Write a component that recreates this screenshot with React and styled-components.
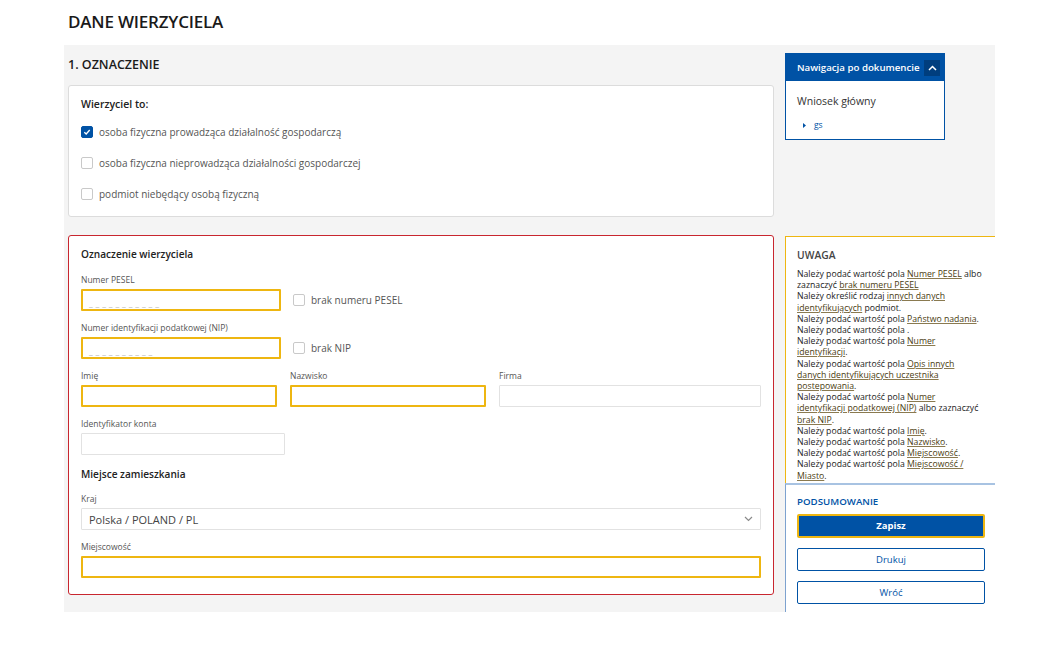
import React from "react";
import styled, { createGlobalStyle } from "styled-components";

const Global = createGlobalStyle`
  * { box-sizing: border-box; }
  html, body { margin: 0; padding: 0; background: #fff; }
  body { font-family: "Open Sans", "Noto Sans", sans-serif; color: #333; }
`;

const BLUE = "#0052a5";
const YELLOW = "#eeb611";

const Page = styled.div`
  width: 931px;
  margin-left: 64px;
`;

const Title = styled.h1`
  margin: 0;
  height: 45px;
  padding: 11px 4px 0;
  font-size: 17px;
  line-height: 22px;
  font-weight: 600;
  color: #1a1a1a;
  letter-spacing: -0.2px;
`;

const Main = styled.div`
  display: flex;
  gap: 11px;
  background: #f4f4f4;
  padding: 0 0 17px 4px;
`;

const LeftCol = styled.div`
  width: 706px;
  display: flex;
  flex-direction: column;
`;

const RightCol = styled.div`
  width: 210px;
  display: flex;
  flex-direction: column;
  margin-bottom: -17px;
`;

const SectionTitle = styled.h2`
  margin: 0;
  padding: 12px 0 12px;
  font-size: 12.5px;
  line-height: 16px;
  font-weight: 600;
  color: #1a1a1a;
`;

const Card = styled.div`
  background: #fff;
  border: 1px solid ${(p) => (p.$invalid ? "#c8262f" : "#dcdcdc")};
  border-radius: 3px;
  padding: ${(p) => p.$pad || "11px 12px 12px"};
  margin-top: ${(p) => p.$mt || "0"};
`;

const CardTitle = styled.div`
  font-size: ${(p) => p.$size || "10.1px"};
  line-height: 14px;
  font-weight: 600;
  color: #222;
  margin-top: ${(p) => p.$mt || "0"};
`;

const OptionList = styled.div`
  display: flex;
  flex-direction: column;
  gap: 15px;
  margin-top: 13px;
`;

const CheckRow = styled.label`
  display: flex;
  align-items: center;
  gap: 6px;
  height: 16px;
  font-size: 10px;
  color: #555;
`;

const Box = styled.span`
  width: 12px;
  height: 12px;
  flex: none;
  border-radius: 2px;
  border: 1px solid ${(p) => (p.$checked ? BLUE : "#c9c9c9")};
  background: ${(p) => (p.$checked ? BLUE : "#fff")};
  display: inline-flex;
  align-items: center;
  justify-content: center;
`;

const Check = ({ checked, children }) => (
  <CheckRow>
    <Box $checked={checked}>
      {checked && (
        <svg width="8" height="8" viewBox="0 0 8 8">
          <path d="M1.3 4.2 L3.2 6 L6.7 2" fill="none" stroke="#fff" strokeWidth="1.3" />
        </svg>
      )}
    </Box>
    {children}
  </CheckRow>
);

const Field = styled.div`
  display: flex;
  flex-direction: column;
  margin-top: ${(p) => p.$mt || "0"};
`;

const Label = styled.div`
  font-size: 8.5px;
  line-height: 12px;
  color: #555;
  margin-bottom: 3px;
`;

const Input = styled.div`
  height: 22px;
  width: ${(p) => p.$w || "100%"};
  border: ${(p) => (p.$required ? `2px solid ${YELLOW}` : "1px solid #e2e2e2")};
  border-radius: 1px;
  background: #fff;
  display: flex;
  align-items: center;
  padding: 0 ${(p) => (p.$required ? "6px" : "7px")};
  font-size: 11px;
  color: #444;
`;

const Mask = styled.span`
  color: #b8b8b8;
  font-size: 8.5px;
  letter-spacing: 2.9px;
  padding-top: 5px;
`;

const InlineRow = styled.div`
  display: flex;
  align-items: center;
  gap: 12px;
`;

const Grid3 = styled.div`
  display: grid;
  grid-template-columns: 196px 196px 1fr;
  column-gap: 13px;
  margin-top: 11px;
`;

const Select = styled(Input)`
  justify-content: space-between;
`;

const NavBox = styled.div`
  width: 160px;
  margin-top: 8px;
  background: #fff;
  border: 1px solid ${BLUE};
`;

const NavHeader = styled.div`
  height: 27px;
  background: ${BLUE};
  display: flex;
  align-items: center;
  justify-content: space-between;
  padding: 0 4px 0 11px;
  color: #fff;
  font-size: 9.7px;
  font-weight: 600;
`;

const Toggle = styled.span`
  width: 16px;
  height: 16px;
  background: #003e7e;
  display: inline-flex;
  align-items: center;
  justify-content: center;
`;

const NavBody = styled.div`
  padding: 13px 10px 8px 11px;
`;

const NavItem = styled.div`
  font-size: 10.5px;
  line-height: 14px;
  color: #333;
`;

const NavLink = styled.div`
  display: flex;
  align-items: center;
  gap: 8px;
  margin-top: 11px;
  padding-left: 6px;
  font-size: 8.5px;
  line-height: 12px;
  color: ${BLUE};
`;

const Notice = styled.div`
  margin-top: 96px;
  background: #fff;
  border-top: 1px solid ${YELLOW};
  border-left: 1px solid ${YELLOW};
  padding: 11px 8px 1px 11px;
`;

const NoticeTitle = styled.div`
  font-size: 10.3px;
  line-height: 14px;
  font-weight: 600;
  color: #444;
  margin-bottom: 7px;
`;

const Msg = styled.div`
  font-size: 8.7px;
  line-height: 11.2px;
  color: #222;
  white-space: nowrap;
`;

const Ref = styled.span`
  color: #4a3c10;
  text-decoration: underline;
  text-decoration-color: #8a7a50;
`;

const Summary = styled.div`
  flex: 1;
  background: #fff;
  border-top: 2px solid #a8c3e2;
  border-left: 1px solid #7da2cf;
  padding: 10px 10px 0 11px;
  display: flex;
  flex-direction: column;
  gap: 10px;
`;

const SummaryTitle = styled.div`
  font-size: 9.7px;
  line-height: 14px;
  font-weight: 600;
  color: ${BLUE};
  margin-bottom: -5px;
`;

const Button = styled.button`
  width: 188px;
  height: ${(p) => (p.$primary ? "24px" : "23px")};
  font-family: inherit;
  font-size: 9.5px;
  font-weight: ${(p) => (p.$primary ? 700 : 400)};
  color: ${(p) => (p.$primary ? "#fff" : BLUE)};
  background: ${(p) => (p.$primary ? BLUE : "#fff")};
  border: ${(p) => (p.$primary ? `2px solid ${YELLOW}` : `1px solid ${BLUE}`)};
  border-radius: 2px;
  padding: 0;
  cursor: pointer;
`;

// each message is a list of lines; a line is a list of plain text and [linked field] parts
const messages = [
  [["Należy podać wartość pola ", ["Numer PESEL"], " albo"], ["zaznaczyć ", ["brak numeru PESEL"]]],
  [["Należy określić rodzaj ", ["innych danych"]], [["identyfikujących"], " podmiot."]],
  [["Należy podać wartość pola ", ["Państwo nadania"], "."]],
  [["Należy podać wartość pola ."]],
  [["Należy podać wartość pola ", ["Numer"]], [["identyfikacji"], "."]],
  [
    ["Należy podać wartość pola ", ["Opis innych"]],
    [["danych identyfikujących uczestnika"]],
    [["postepowania"], "."],
  ],
  [
    ["Należy podać wartość pola ", ["Numer"]],
    [["identyfikacji podatkowej (NIP)"], " albo zaznaczyć"],
    [["brak NIP"], "."],
  ],
  [["Należy podać wartość pola ", ["Imię"], "."]],
  [["Należy podać wartość pola ", ["Nazwisko"], "."]],
  [["Należy podać wartość pola ", ["Miejscowość"], "."]],
  [["Należy podać wartość pola ", ["Miejscowość /"]], [["Miasto"], "."]],
];

export default function App() {
  return (
    <Page>
      <Global />
      <Title>DANE WIERZYCIELA</Title>
      <Main>
        <LeftCol>
          <SectionTitle>1. OZNACZENIE</SectionTitle>
          <Card $pad="11px 12px 14px">
            <CardTitle $size="10.5px">Wierzyciel to:</CardTitle>
            <OptionList>
              <Check checked>osoba fizyczna prowadząca działalność gospodarczą</Check>
              <Check>osoba fizyczna nieprowadząca działalności gospodarczej</Check>
              <Check>podmiot niebędący osobą fizyczną</Check>
            </OptionList>
          </Card>

          <Card $invalid $mt="18px" $pad="11px 12px 16px">
            <CardTitle>Oznaczenie wierzyciela</CardTitle>
            <Field $mt="13px">
              <Label>Numer PESEL</Label>
              <InlineRow>
                <Input $required $w="200px">
                  <Mask>___________</Mask>
                </Input>
                <Check>brak numeru PESEL</Check>
              </InlineRow>
            </Field>
            <Field $mt="11px">
              <Label>Numer identyfikacji podatkowej (NIP)</Label>
              <InlineRow>
                <Input $required $w="200px">
                  <Mask>__________</Mask>
                </Input>
                <Check>brak NIP</Check>
              </InlineRow>
            </Field>
            <Grid3>
              <Field>
                <Label>Imię</Label>
                <Input $required />
              </Field>
              <Field>
                <Label>Nazwisko</Label>
                <Input $required />
              </Field>
              <Field>
                <Label>Firma</Label>
                <Input />
              </Field>
            </Grid3>
            <Field $mt="11px">
              <Label>Identyfikator konta</Label>
              <Input $w="204px" />
            </Field>
            <CardTitle $mt="12px">Miejsce zamieszkania</CardTitle>
            <Field $mt="12px">
              <Label>Kraj</Label>
              <Select>
                <span>Polska / POLAND / PL</span>
                <svg width="9" height="6" viewBox="0 0 9 6">
                  <path d="M1 1 L4.5 4.5 L8 1" fill="none" stroke="#8a8a8a" strokeWidth="1.2" />
                </svg>
              </Select>
            </Field>
            <Field $mt="11px">
              <Label>Miejscowość</Label>
              <Input $required />
            </Field>
          </Card>
        </LeftCol>

        <RightCol>
          <NavBox>
            <NavHeader>
              <span>Nawigacja po dokumencie</span>
              <Toggle>
                <svg width="9" height="6" viewBox="0 0 9 6">
                  <path d="M1 5 L4.5 1.5 L8 5" fill="none" stroke="#fff" strokeWidth="1.5" />
                </svg>
              </Toggle>
            </NavHeader>
            <NavBody>
              <NavItem>Wniosek główny</NavItem>
              <NavLink>
                <svg width="3" height="5" viewBox="0 0 3 5">
                  <path d="M0 0 L3 2.5 L0 5 Z" fill={BLUE} />
                </svg>
                gs
              </NavLink>
            </NavBody>
          </NavBox>

          <Notice>
            <NoticeTitle>UWAGA</NoticeTitle>
            {messages.map((lines, i) => (
              <Msg key={i}>
                {lines.map((parts, l) => (
                  <React.Fragment key={l}>
                    {l > 0 && <br />}
                    {parts.map((p, j) =>
                      Array.isArray(p) ? (
                        <Ref key={j}>{p[0]}</Ref>
                      ) : (
                        <React.Fragment key={j}>{p}</React.Fragment>
                      )
                    )}
                  </React.Fragment>
                ))}
              </Msg>
            ))}
          </Notice>

          <Summary>
            <SummaryTitle>PODSUMOWANIE</SummaryTitle>
            <Button $primary>Zapisz</Button>
            <Button>Drukuj</Button>
            <Button>Wróć</Button>
          </Summary>
        </RightCol>
      </Main>
    </Page>
  );
}
